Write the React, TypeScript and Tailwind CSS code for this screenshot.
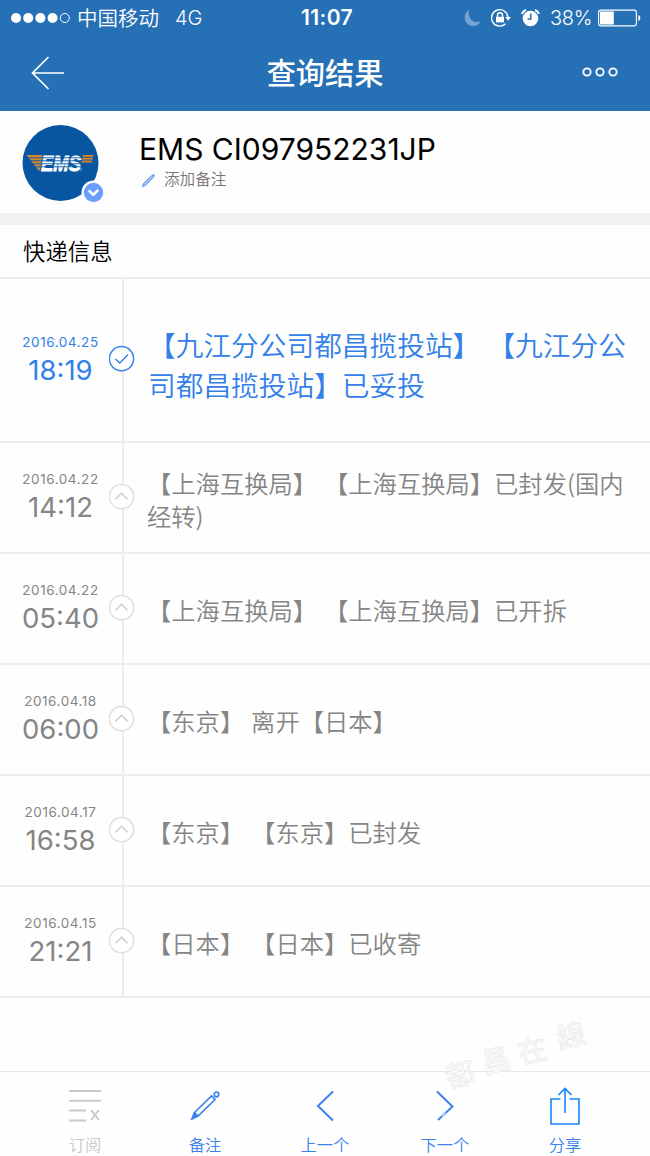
const events = [
  { date: "2016.04.22", time: "14:12", text: "【上海互换局】 【上海互换局】已封发(国内经转)" },
  { date: "2016.04.22", time: "05:40", text: "【上海互换局】 【上海互换局】已开拆" },
  { date: "2016.04.18", time: "06:00", text: "【东京】 离开【日本】" },
  { date: "2016.04.17", time: "16:58", text: "【东京】 【东京】已封发" },
  { date: "2016.04.15", time: "21:21", text: "【日本】 【日本】已收寄" },
];

function StatusBar() {
  return (
    <div className="flex h-9 items-center pl-[11px] pr-[9px]">
      <div className="flex flex-1 items-center">
        <svg width="60" height="12" viewBox="0 0 60 12" fill="#fff">
          <circle cx="5" cy="6" r="5" />
          <circle cx="17.2" cy="6" r="5" />
          <circle cx="29.4" cy="6" r="5" />
          <circle cx="41.6" cy="6" r="5" />
          <circle cx="53.8" cy="6" r="4.5" fill="none" stroke="#fff" strokeWidth="1" />
        </svg>
        <span className="ml-[6px] pt-px text-[20.5px] leading-9 font-[350]">中国移动</span>
        <span className="ml-4 text-[20px] leading-9 font-[350]">4G</span>
      </div>
      <span className="pl-[2px] text-[21px] leading-9 font-semibold tracking-[0.4px]">11:07</span>
      <div className="flex flex-1 items-center justify-end">
        <svg width="17" height="18" viewBox="0 0 17 18" fill="#73a4d3">
          <path d="M5.5 1C1.500 3 0 7 1 10.500C2 14.500 5 17 9 17C12.500 17 15.500 15 16.500 12C14 13.500 10.500 13.200 8 11.200C5 8.800 4 5 5.500 1Z" />
        </svg>
        <svg className="ml-[9px]" width="22" height="20" viewBox="0 0 22 20" fill="none" stroke="#fff" strokeWidth="1.400">
          <path d="M18 9.500A8.200 8.200 0 1 0 15.500 15.800" />
          <path d="M15.200 9H21L18.100 12.800Z" fill="#fff" stroke="none" />
          <rect x="6" y="8.800" width="8" height="5.600" fill="#fff" stroke="none" />
          <path d="M7.500 9V7.200a2.500 2.500 0 0 1 5 0V9" />
        </svg>
        <svg className="ml-[9px]" width="19" height="18" viewBox="0 0 19 18">
          <circle cx="9.500" cy="9.500" r="7.800" fill="#fff" />
          <path d="M1 5A6 6 0 0 1 5 1M14 1A6 6 0 0 1 18 5" stroke="#fff" strokeWidth="2" fill="none" />
          <path d="M9.800 4.500V10H6.500" stroke="#2670b5" strokeWidth="1.500" fill="none" />
        </svg>
        <span className="ml-[10px] text-[20px] leading-9 font-[350] tracking-[-0.4px]">38%</span>
        <svg className="ml-[6px]" width="43" height="18" viewBox="0 0 43 18">
          <rect x="0.600" y="1.100" width="37.800" height="15.800" rx="2.500" fill="none" stroke="#fff" strokeWidth="1.100" />
          <rect x="2" y="2.500" width="13.800" height="13" fill="#fff" />
          <path d="M40.300 6C43 7 43 11 40.300 12Z" fill="#fff" />
        </svg>
      </div>
    </div>
  );
}

function NavBar() {
  return (
    <div className="flex h-[73px] items-center justify-between pr-8 pl-[31px]">
      <svg width="34" height="36" viewBox="0 0 34 36" fill="none" stroke="#fff" strokeWidth="1.700">
        <path d="M17.500 2L1.500 18L17.500 34M1.500 18H33" />
      </svg>
      <h1 className="pt-[3px] pl-[3px] text-[29.2px] leading-none font-medium">查询结果</h1>
      <svg className="mb-[2px]" width="36" height="10" viewBox="0 0 36 10" fill="none" stroke="#fff" strokeWidth="1.800">
        <circle cx="5" cy="5" r="3.700" />
        <circle cx="18" cy="5" r="3.700" />
        <circle cx="31" cy="5" r="3.700" />
      </svg>
    </div>
  );
}

function EmsLogo() {
  return (
    <svg width="84" height="80" viewBox="0 0 84 80">
      <circle cx="38.500" cy="38" r="38" fill="#0756a2" />
      <path d="M4.500 30H20.500L18 45.500H16.500Z" fill="#d5862f" />
      <path d="M61 30H71.500L70 37.500H59Z" fill="#d5862f" />
      <text x="19" y="45.500" fontFamily="Liberation Sans, sans-serif" fontSize="22" fontWeight="700" fontStyle="italic" fill="#fff" stroke="#fff" strokeWidth="0.900" textLength="40" lengthAdjust="spacingAndGlyphs">EMS</text>
      <path d="M4 32.800H20M6 35.800H20M8 38.800H19M10 41.800H19M59 32.300H72M59 35.100H72M20 32.800H60M20 35.800H60M20 38.800H60M19 41.800H60" stroke="#0756a2" strokeWidth="0.900" />
      <circle cx="59" cy="44.500" r="1" fill="none" stroke="#8fb3d6" strokeWidth="0.600" />
      <circle cx="71.500" cy="67.500" r="12" fill="#fff" />
      <circle cx="71.500" cy="67.500" r="9.700" fill="#6b9dfb" />
      <path d="M66.800 65.300L71.300 69.800L76.200 65" fill="none" stroke="#fff" strokeWidth="2.500" />
    </svg>
  );
}

function SmallPencil() {
  return (
    <svg width="13" height="13" viewBox="0 0 13 13">
      <path d="M0.500 12.500L1.500 9.500L10 1.500L12 0.500L12 2.500L3.500 11.300Z" fill="#a9c9f5" stroke="#3c82eb" strokeWidth="0.900" />
    </svg>
  );
}

function Timestamp({ date, time }: { date: string; time: string }) {
  return (
    <div className="w-[121px] text-center">
      <div className="text-[13.5px] leading-[18px] tracking-[0.55px]">{date}</div>
      <div className="mt-[1px] text-[27.5px] leading-[36px]">{time}</div>
    </div>
  );
}

function Marker({ done }: { done?: boolean }) {
  return (
    <div className="flex w-[3px] shrink-0 justify-center self-stretch">
      <div className={done ? "flex w-[2px] justify-center bg-[#ededed] pt-[66px]" : "flex w-[2px] justify-center bg-[#ededed] pt-[40px]"}>
        <svg className="shrink-0" width="28" height="28" viewBox="0 0 28 28" fill="none">
          <circle cx="12.500" cy="13.700" r="12.100" fill="#fff" stroke={done ? "#3c82eb" : "#dfdfdf"} strokeWidth="1.500" />
          {done ? <path d="M6.500 14L10.800 18L19 9.500" stroke="#3c82eb" strokeWidth="1.500" /> : <path d="M6.500 16.300L12.500 10.300L18.500 16.300" stroke="#ccc" strokeWidth="1.500" />}
        </svg>
      </div>
    </div>
  );
}

function Toolbar() {
  return (
    <footer className="flex h-[85px] shrink-0 border-t border-[#e7e7e7] px-[25px] text-center text-[16.3px] font-[350] text-[#3c82eb]">
      <div className="flex w-[120px] flex-col items-center pt-[16px] text-[#c9c9c9]">
        <svg className="shrink-0" width="32" height="36" viewBox="0 0 32 36" fill="none" stroke="currentColor" strokeWidth="2">
          <path d="M0 3H32M0 12.800H32M0 22.600H17M0 32.500H17M22 22L30 32M30 22L22 32" />
        </svg>
        <span className="mt-[10px] leading-[22px]">订阅</span>
      </div>
      <div className="flex w-[120px] flex-col items-center pt-[19px]">
        <svg className="shrink-0" width="30" height="30" viewBox="0 0 30 30" fill="none" stroke="currentColor" strokeWidth="1.700">
          <path d="M4.500 21.500L21.500 5L25 8.500L8 25Z" />
          <path d="M4 21.500L1 29L8 25.500Z" fill="currentColor" strokeWidth="0.800" />
          <circle cx="26.500" cy="3.500" r="2.300" />
        </svg>
        <span className="mt-[13px] leading-[22px]">备注</span>
      </div>
      <div className="flex w-[120px] flex-col items-center pt-[18px]">
        <svg className="shrink-0" width="20" height="32" viewBox="0 0 20 32" fill="none" stroke="currentColor" strokeWidth="2">
          <path d="M18 1.500L3 16L18 30.500" />
        </svg>
        <span className="mt-[12px] leading-[22px]">上一个</span>
      </div>
      <div className="flex w-[120px] flex-col items-center pt-[18px]">
        <svg className="shrink-0" width="20" height="32" viewBox="0 0 20 32" fill="none" stroke="currentColor" strokeWidth="2">
          <path d="M2 1.500L17.500 16.500L3 30" />
          <path d="M10.500 23L7 26.300" stroke="#a9c9f5" />
        </svg>
        <span className="mt-[12px] leading-[22px]">下一个</span>
      </div>
      <div className="flex w-[120px] flex-col items-center pt-[15px]">
        <svg className="shrink-0" width="30" height="38" viewBox="0 0 30 38" fill="none" stroke="#1684fc" strokeWidth="1.600">
          <path d="M10.500 12H1V37H29V12H19.500M15 26V1.500M8.500 8L15 1.500L21.500 8" />
        </svg>
        <span className="mt-[9px] leading-[22px]">分享</span>
      </div>
    </footer>
  );
}

// faint site name laid over the bottom right corner
function Watermark() {
  return (
    <svg className="pointer-events-none absolute bottom-[36px] left-[430px]" width="190" height="120" viewBox="0 0 190 120" fontFamily="Noto Sans CJK SC, sans-serif" fontSize="29" fill="#fff" stroke="#e6e6e6" strokeWidth="0.700">
      <text transform="translate(18 88) rotate(-12)">都</text>
      <text transform="translate(54 74) rotate(-12)">昌</text>
      <text transform="translate(90 64) rotate(-12)">在</text>
      <text transform="translate(129 49) rotate(-12)">線</text>
    </svg>
  );
}

export default function App() {
  return (
    <div className="relative flex h-[1156px] w-[650px] flex-col overflow-hidden bg-[#fefefe] font-['Inter','Noto_Sans_CJK_SC',sans-serif]">
      <header className="h-[111px] shrink-0 bg-[#2670b5] text-white">
        <StatusBar />
        <NavBar />
      </header>

      <section className="flex h-[102px] shrink-0 pt-[14px] pl-[22px]">
        <EmsLogo />
        <div className="ml-[33px] pt-[4px]">
          <div className="text-[30px] leading-[40px] text-black">EMS CI097952231JP</div>
          <div className="flex items-center gap-[9px] pt-px pl-[3px] text-[15.6px] leading-[20px] font-[350] text-[#777]">
            <SmallPencil />
            <span>添加备注</span>
          </div>
        </div>
      </section>

      <div className="h-3 shrink-0 bg-[#f1f1f1]" />
      <h2 className="h-[54px] shrink-0 border-b-2 border-[#ededed] pl-[23px] text-[22.4px] leading-[54px] font-[350] text-black">快递信息</h2>

      <main className="flex-1">
        <div className="flex h-[164px] border-b-2 border-[#ededed] text-[#3280e8]">
          <div className="pt-[54px]">
            <Timestamp date="2016.04.25" time="18:19" />
          </div>
          <Marker done />
          <p className="ml-[24px] w-[490px] self-center pt-[7px] font-['Noto_Sans_CJK_SC',sans-serif] text-[27.7px] leading-[40px] font-[350] [word-spacing:1px]">【九江分公司都昌揽投站】 【九江分公司都昌揽投站】已妥投</p>
        </div>
        {events.map((e) => (
          <div key={e.date + e.time} className="flex h-[111px] border-b-2 border-[#ededed] text-[#858585]">
            <div className="pt-[27px]">
              <Timestamp date={e.date} time={e.time} />
            </div>
            <Marker />
            <p className="ml-[23px] w-[490px] self-center pt-[2px] font-['Noto_Sans_CJK_SC',sans-serif] text-[24.3px] leading-[33px] font-[350] [word-spacing:1.5px]">{e.text}</p>
          </div>
        ))}
      </main>

      <Toolbar />
      <Watermark />
    </div>
  );
}
